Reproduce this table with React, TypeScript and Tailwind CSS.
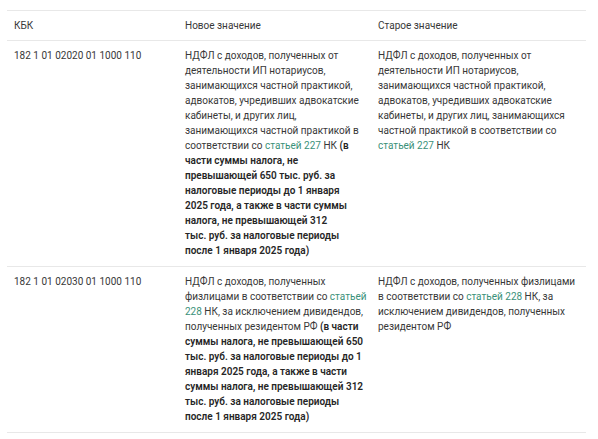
import React from "react";

const L = ({ children }: { children: React.ReactNode }) => (
  <span className="text-[#3a9179]">{children}</span>
);

const B = ({ children }: { children: React.ReactNode }) => (
  <span className="font-semibold text-[#262626]">{children}</span>
);

const Cell = ({ lines }: { lines: React.ReactNode[] }) => (
  <div className="px-[7px] pt-[7px] pb-[8px]">
    {lines.map((line, i) => (
      <div key={i} className="whitespace-nowrap">
        {line}
      </div>
    ))}
  </div>
);

const rows: { kbk: string; next: React.ReactNode[]; prev: React.ReactNode[] }[] = [
  {
    kbk: "182 1 01 02020 01 1000 110",
    next: [
      "НДФЛ с доходов, полученных от",
      "деятельности ИП нотариусов,",
      "занимающихся частной практикой,",
      "адвокатов, учредивших адвокатские",
      "кабинеты, и других лиц,",
      "занимающихся частной практикой в",
      <>
        соответствии со <L>статьей 227</L> НК <B>(в</B>
      </>,
      <B>части суммы налога, не</B>,
      <B>превышающей 650 тыс. руб. за</B>,
      <B>налоговые периоды до 1 января</B>,
      <B>2025 года, а также в части суммы</B>,
      <B>налога, не превышающей 312</B>,
      <B>тыс. руб. за налоговые периоды</B>,
      <B>после 1 января 2025 года)</B>,
    ],
    prev: [
      "НДФЛ с доходов, полученных от",
      "деятельности ИП нотариусов,",
      "занимающихся частной практикой,",
      "адвокатов, учредивших адвокатские",
      "кабинеты, и других лиц, занимающихся",
      "частной практикой в соответствии со",
      <>
        <L>статьей 227</L> НК
      </>,
    ],
  },
  {
    kbk: "182 1 01 02030 01 1000 110",
    next: [
      "НДФЛ с доходов, полученных",
      <>
        физлицами в соответствии со <L>статьей</L>
      </>,
      <>
        <L>228</L> НК, за исключением дивидендов,
      </>,
      <>
        полученных резидентом РФ <B>(в части</B>
      </>,
      <B>суммы налога, не превышающей 650</B>,
      <B>тыс. руб. за налоговые периоды до 1</B>,
      <B>января 2025 года, а также в части</B>,
      <B>суммы налога, не превышающей 312</B>,
      <B>тыс. руб. за налоговые периоды</B>,
      <B>после 1 января 2025 года)</B>,
    ],
    prev: [
      "НДФЛ с доходов, полученных физлицами",
      <>
        в соответствии со <L>статьей 228</L> НК, за
      </>,
      "исключением дивидендов, полученных",
      "резидентом РФ",
    ],
  },
];

export default function App() {
  return (
    <div className="min-h-[439px] bg-white pt-[10px] pl-[7px] font-['Roboto',sans-serif] text-[10px] leading-[15px] text-[#383838]">
      <div className="w-[579px]">
        <div className="grid grid-cols-[171px_193px_215px] border-y border-[#e8e8e8]">
          <div className="px-[7px] py-[7px]">КБК</div>
          <div className="px-[7px] py-[7px]">Новое значение</div>
          <div className="px-[7px] py-[7px]">Старое значение</div>
        </div>
        {rows.map((r) => (
          <div key={r.kbk} className="grid grid-cols-[171px_193px_215px] border-b border-[#e8e8e8]">
            <Cell lines={[r.kbk]} />
            <Cell lines={r.next} />
            <Cell lines={r.prev} />
          </div>
        ))}
      </div>
    </div>
  );
}
